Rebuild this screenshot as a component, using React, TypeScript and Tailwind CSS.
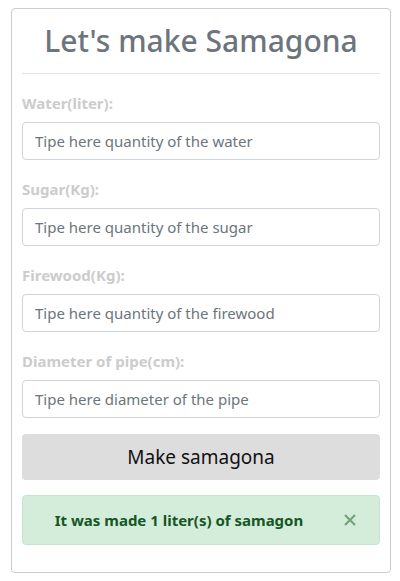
const fields = [
  { label: 'Water(liter):', placeholder: 'Tipe here quantity of the water' },
  { label: 'Sugar(Kg):', placeholder: 'Tipe here quantity of the sugar' },
  { label: 'Firewood(Kg):', placeholder: 'Tipe here quantity of the firewood' },
  { label: 'Diameter of pipe(cm):', placeholder: 'Tipe here diameter of the pipe' },
];

export default function App() {
  return (
    <div className="w-[400px] h-[581px] bg-white pt-2 pl-[11px] font-['Noto_Sans',sans-serif]">
      <div className="w-[380px] h-[565px] border border-[#cccccc] rounded px-[10px]">
        <h2 className="h-[64px] flex items-center justify-center text-[30px] text-[#6c757d] font-medium leading-none">
          Let's make Samagona
        </h2>
        <hr className="border-t border-[#e5e5e5]" />
        <form className="pt-[19px] flex flex-col">
          <div className="flex flex-col gap-[19px] mb-4">
            {fields.map((f) => (
              <div key={f.label}>
                <label className="block h-[21px] mb-2 text-[15px] font-bold leading-[21px] text-[#cccccc]">
                  {f.label}
                </label>
                <input
                  type="text"
                  placeholder={f.placeholder}
                  className="block w-full h-[38px] px-3 border border-[#ced4da] rounded text-[15px] text-[#495057] placeholder:text-[#6c757d] outline-none"
                />
              </div>
            ))}
          </div>
          <button
            type="button"
            className="w-full h-[46px] rounded bg-[#dddddd] text-[19px] text-[#111111]"
          >
            Make samagona
          </button>
          <div className="relative mt-[15px] h-[50px] flex items-center justify-center pl-5 pr-16 rounded border border-[#c3e6cb] bg-[#d4edda] text-[15px] font-bold text-[#155724]">
            It was made 1 liter(s) of samagon
            <button type="button" className="absolute right-[22px] top-1/2 -translate-y-1/2 text-[#155724]/50">
              <svg width="14" height="14" viewBox="0 0 14 14" stroke="currentColor" strokeWidth="2.2">
                <path d="M2 2l10 10M12 2L2 12" />
              </svg>
            </button>
          </div>
        </form>
      </div>
    </div>
  );
}
